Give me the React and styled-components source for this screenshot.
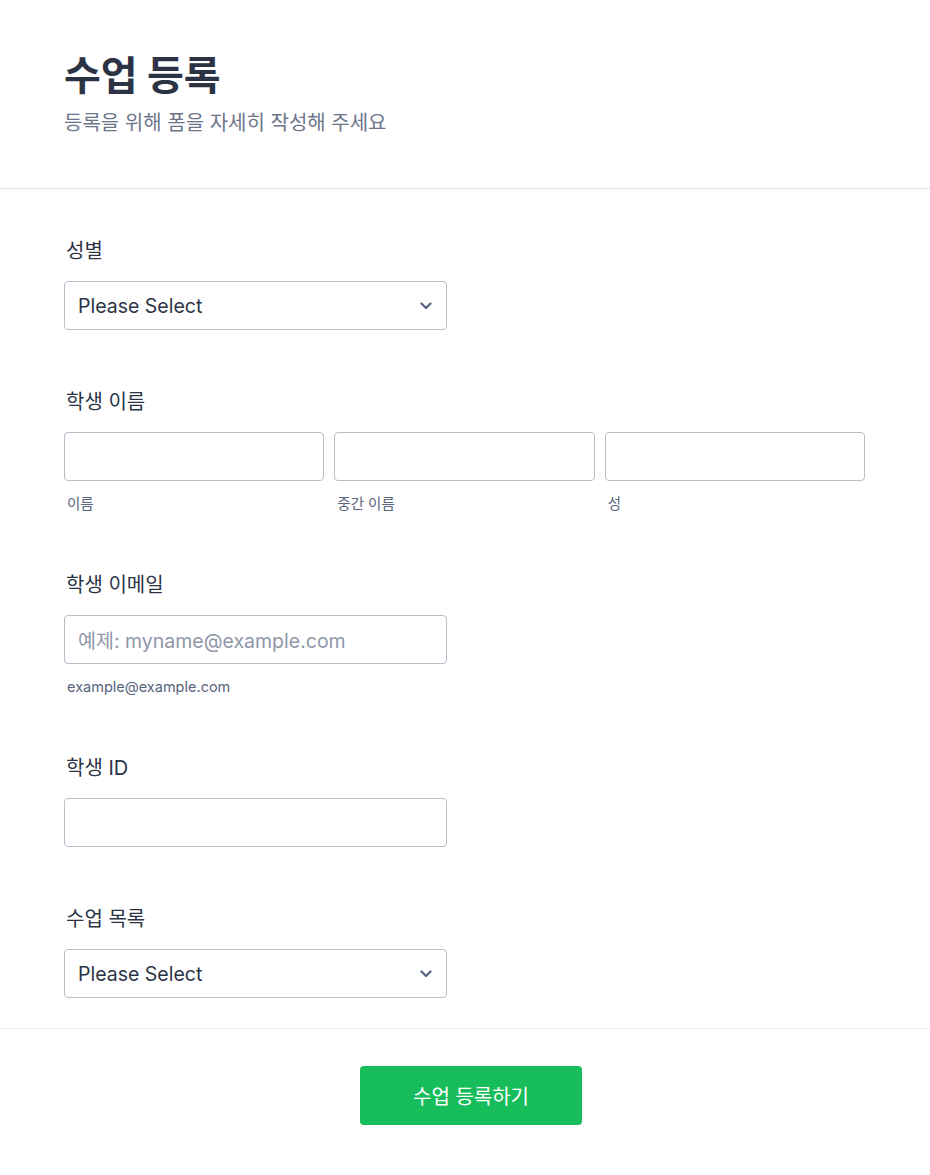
import React from "react"
import styled, { createGlobalStyle } from "styled-components"

const GlobalStyle = createGlobalStyle`
  body {
    margin: 0;
    background: #fff;
    font-family: Inter, "Noto Sans CJK KR", sans-serif;
    color: #2c3345;
  }
`

const Page = styled.main`
  width: 930px;
`

const Header = styled.header`
  padding: 53px 64px 52px;
  border-bottom: 1px solid #dfe3ec;
`

const Title = styled.h1`
  margin: 0;
  font-size: 40px;
  line-height: 46px;
  font-weight: 700;
  color: #2c3345;
`

const Subtitle = styled.p`
  margin: 11px 0 0;
  font-size: 20px;
  line-height: 26px;
  color: #6c7489;
`

const Form = styled.form`
  display: flex;
  flex-direction: column;
  gap: 59px;
  padding: 49px 64px 30px;
  border-bottom: 1px solid #eceef3;
`

const Field = styled.div`
  display: flex;
  flex-direction: column;
`

const Label = styled.label`
  font-size: 20px;
  line-height: 26px;
  margin: 0 0 17px 2px;
  color: #2c3345;
`

const Box = styled.div`
  box-sizing: border-box;
  width: ${(p) => p.$width || "383px"};
  height: 49px;
  border: 1px solid #b8bdc9;
  border-radius: 4px;
  background: #fff;
  display: flex;
  align-items: center;
  padding: 0 14px 0 13px;
  font-size: 19.5px;
  color: ${(p) => (p.$placeholder ? "#8f96a8" : "#2c3345")};
`

const Chevron = styled.svg`
  margin-left: auto;
  width: 12px;
  height: 8px;
`

const NameGrid = styled.div`
  display: grid;
  grid-template-columns: repeat(3, 1fr);
  column-gap: 10px;
  width: 801px;
`

const Sub = styled.span`
  margin: 14px 0 0 3px;
  font-size: 14.5px;
  line-height: 18px;
  color: #57647e;
`

const NameCol = styled.div`
  display: flex;
  flex-direction: column;
`

const Footer = styled.div`
  display: flex;
  justify-content: center;
  padding: 37px 0 40px 12px;
`

const Submit = styled.button`
  width: 222px;
  height: 59px;
  border: none;
  border-radius: 4px;
  background: #18bd5b;
  color: #fff;
  font-family: Inter, "Noto Sans CJK KR", sans-serif;
  font-size: 20px;
`

const SelectBox = () => (
  <Box>
    Please Select
    <Chevron viewBox="0 0 12 8">
      <path d="M1.5 1.5 L6 6 L10.5 1.5" fill="none" stroke="#57647e" strokeWidth="2.2" strokeLinecap="round" strokeLinejoin="round" />
    </Chevron>
  </Box>
)

const App = () => {
  return (
    <Page>
      <GlobalStyle />
      <Header>
        <Title>수업 등록</Title>
        <Subtitle>등록을 위해 폼을 자세히 작성해 주세요</Subtitle>
      </Header>
      <Form>
        <Field>
          <Label>성별</Label>
          <SelectBox />
        </Field>
        <Field>
          <Label>학생 이름</Label>
          <NameGrid>
            {["이름", "중간 이름", "성"].map((s) => (
              <NameCol key={s}>
                <Box $width="100%" />
                <Sub>{s}</Sub>
              </NameCol>
            ))}
          </NameGrid>
        </Field>
        <Field>
          <Label>학생 이메일</Label>
          <Box $placeholder>예제: myname@example.com</Box>
          <Sub>example@example.com</Sub>
        </Field>
        <Field>
          <Label>학생 ID</Label>
          <Box />
        </Field>
        <Field>
          <Label>수업 목록</Label>
          <SelectBox />
        </Field>
      </Form>
      <Footer>
        <Submit type="button">수업 등록하기</Submit>
      </Footer>
    </Page>
  )
}

export default App
